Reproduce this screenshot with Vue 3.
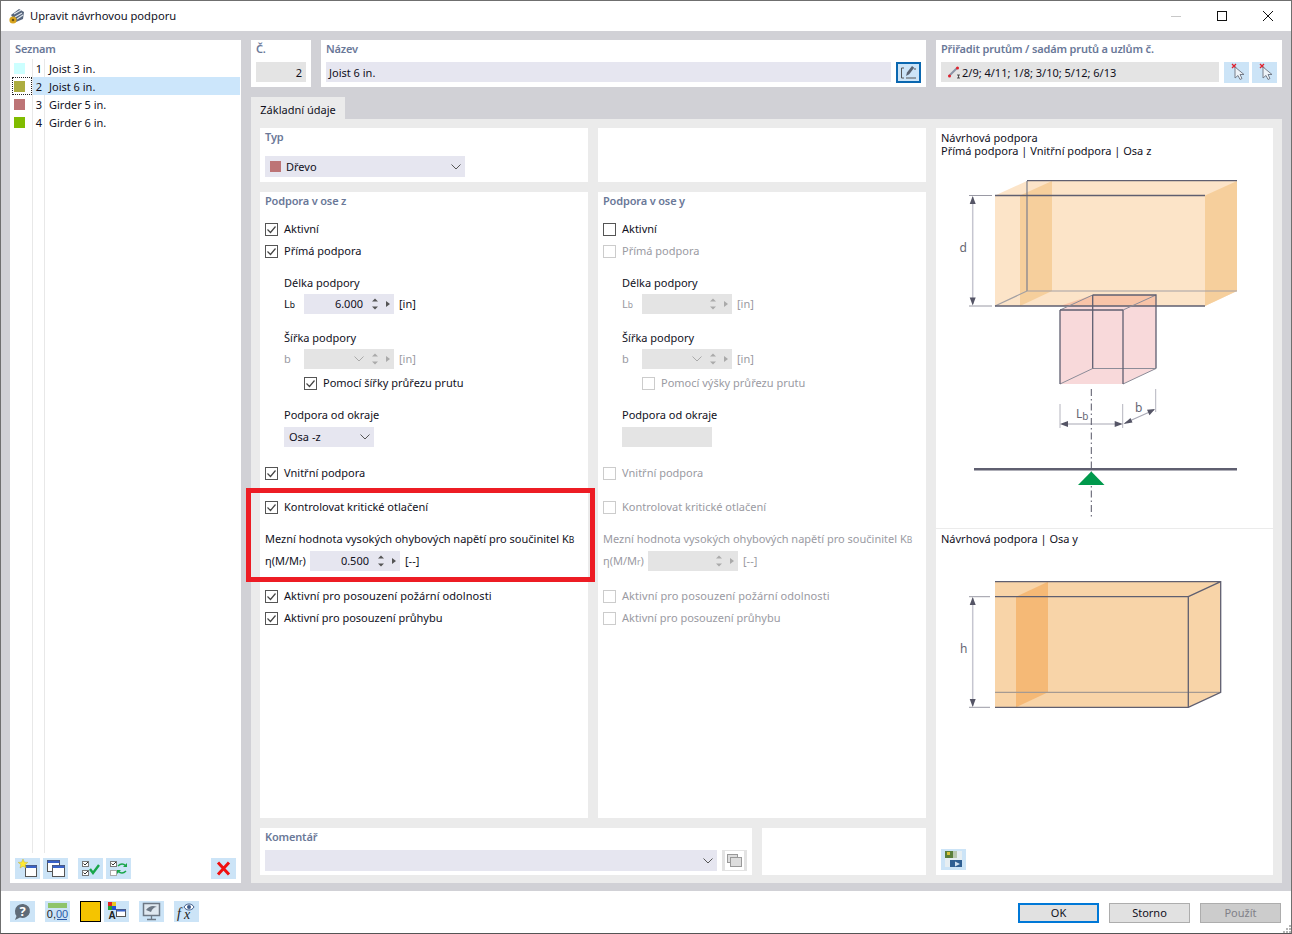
<script setup>
const items = [
  { n: 1, name: 'Joist 3 in.', color: '#ccffff' },
  { n: 2, name: 'Joist 6 in.', color: '#adad40', sel: true },
  { n: 3, name: 'Girder 5 in.', color: '#bd7476' },
  { n: 4, name: 'Girder 6 in.', color: '#80bc00' },
]
const cols = [
  { title: 'Podpora v ose z', off: false, active: true, direct: true, len: '6.000', useLabel: 'Pomocí šířky průřezu prutu', edge: 'Osa -z', lim: '0.500' },
  { title: 'Podpora v ose y', off: true, active: false, direct: false, len: '', useLabel: 'Pomocí výšky průřezu prutu', edge: '', lim: '' },
]
</script>

<template>
  <div class="win">
    <header class="titlebar">
      <svg class="appicon" viewBox="0 0 18 18">
        <path d="M3 8l8-6 5 3-1 7-7 3z" fill="#56657c" />
        <path d="M6 7l7-4M7 10l7-4M9 12l6-4" stroke="#dfe5ec" stroke-width="1.2" fill="none" />
        <circle cx="5" cy="13" r="3.6" fill="#d9a520" />
        <circle cx="5" cy="13" r="1.3" fill="#6b5310" />
      </svg>
      <span class="wintitle">Upravit návrhovou podporu</span>
      <div class="winbtns">
        <svg viewBox="0 0 46 30"><path d="M18 15.5h10" stroke="#c8c8c8" /></svg>
        <svg viewBox="0 0 46 30"><rect x="18.5" y="10.5" width="9" height="9" fill="none" stroke="#111" /></svg>
        <svg viewBox="0 0 46 30"><path d="M18 10l10 10M28 10l-10 10" stroke="#111" fill="none" /></svg>
      </div>
    </header>

    <main class="body">
      <aside class="listpanel">
        <div class="head listhead">Seznam</div>
        <div class="list">
          <div v-for="it in items" :key="it.n" class="lrow">
            <div class="swcell" :class="{ focus: it.sel }"><i class="sw" :style="{ background: it.color }"></i></div>
            <div class="lnum" :class="{ sel: it.sel }">{{ it.n }}</div>
            <div class="lname" :class="{ sel: it.sel }">{{ it.name }}</div>
          </div>
        </div>
        <div class="listbtns">
          <button class="ib">
            <svg viewBox="0 0 25 21"><rect x="10.5" y="7.5" width="11" height="11" fill="#fff" stroke="#555" /><rect x="10.5" y="7.5" width="11" height="2.5" fill="#3a63c8" /><path d="M8 1l1.4 3.2 3.4.2-2.6 2.2.9 3.4L8 8.2 5 10l.9-3.4L3.200 4.400l3.400-.2z" fill="#ffe933" stroke="#b9a520" stroke-width=".4" /></svg>
          </button>
          <button class="ib">
            <svg viewBox="0 0 25 21"><rect x="4.500" y="2.500" width="12" height="11" fill="#fff" stroke="#555" /><rect x="4.500" y="2.500" width="12" height="2.500" fill="#3a63c8" /><rect x="9.500" y="7.500" width="12" height="11" fill="#fff" stroke="#555" /><rect x="9.500" y="7.500" width="12" height="2.500" fill="#3a63c8" /></svg>
          </button>
          <button class="ib gap1">
            <svg viewBox="0 0 25 21"><rect x="4.500" y="3.500" width="6" height="5" fill="#fff" stroke="#777" /><rect x="4.500" y="12.500" width="6" height="5" fill="#fff" stroke="#777" /><path d="M5.500 5.500l1.500 1.500 3-3M5.500 14.500l1.500 1.500 3-3" stroke="#333" fill="none" /><path d="M12 11l3 4 6-8" stroke="#1aa64a" stroke-width="2.400" fill="none" /></svg>
          </button>
          <button class="ib">
            <svg viewBox="0 0 25 21"><rect x="4.500" y="3.500" width="6" height="5" fill="#fff" stroke="#777" /><rect x="4.500" y="12.500" width="6" height="5" fill="#fff" stroke="#aaa" /><path d="M5.500 5.500l1.500 1.500 3-3" stroke="#333" fill="none" /><path d="M12 8c3-3 6-2 8 0M20 13c-3 3-6 2-8 0" stroke="#1aa64a" stroke-width="1.500" fill="none" /><path d="M21 5v4h-4zM11 16v-4h4z" fill="#1aa64a" /></svg>
          </button>
          <button class="ib del">
            <svg viewBox="0 0 25 21"><path d="M7 4.500l11 12M18 4.500l-11 12" stroke="#f01010" stroke-width="3" fill="none" /></svg>
          </button>
        </div>
      </aside>

      <section class="right">
        <div class="toprow">
          <div class="tcard c-no">
            <div class="head">Č.</div>
            <div class="roinput numval">2</div>
          </div>
          <div class="tcard c-name">
            <div class="head">Název</div>
            <div class="nameline">
              <div class="input grow">Joist 6 in.</div>
              <button class="ib editbtn">
                <svg viewBox="0 0 25 21"><path d="M8 6H5.500v10H8M10 16h10M18 7h2" stroke="#555" fill="none" /><path d="M10 14l1-3.500 5-6.500 2.200 1.800-5 6.500z" fill="#5b6472" /></svg>
              </button>
            </div>
          </div>
          <div class="tcard c-assign">
            <div class="head">Přiřadit prutům / sadám prutů a uzlům č.</div>
            <div class="nameline">
              <div class="roinput grow assign">
                <svg class="memb" viewBox="0 0 14 14"><path d="M2 11l8-8" stroke="#8a93a5" stroke-width="2" /><circle cx="2.500" cy="11" r="1.500" fill="#e0202c" /><circle cx="10.500" cy="3" r="1.500" fill="#e0202c" /><path d="M10 10h3M11.500 10v3M10 13h3" stroke="#333" stroke-width=".8" /></svg>
                2/9; 4/11; 1/8; 3/10; 5/12; 6/13
              </div>
              <button class="ib pick">
                <svg viewBox="0 0 25 21"><path d="M8 2l4 4M12 2L8 6" stroke="#e0202c" stroke-width="1.300" /><path d="M11 5v11l3-2.500 2 4 2-1-2-4h4z" fill="#eef3f8" stroke="#6d7480" stroke-width=".9" /></svg>
              </button>
              <button class="ib pick2">
                <svg viewBox="0 0 25 21"><path d="M8 2l4 4M12 2L8 6" stroke="#e0202c" stroke-width="1.300" /><path d="M11 5v11l3-2.500 2 4 2-1-2-4h4z" fill="#eef3f8" stroke="#6d7480" stroke-width=".9" /></svg>
              </button>
            </div>
          </div>
        </div>

        <div class="tab">Základní údaje</div>

        <div class="tabpanel">
          <div class="card typ">
            <div class="head">Typ</div>
            <div class="select typsel">
              <i class="typsw"></i><span>Dřevo</span>
              <svg class="chev" viewBox="0 0 10 6"><path d="M.5.500l4.500 4.500 4.500-4.500" fill="none" stroke="#555" /></svg>
            </div>
          </div>
          <div class="card"></div>

          <div class="card pic">
            <div class="pictext">Návrhová podpora<br />Přímá podpora | Vnitřní podpora | Osa z</div>
            <svg class="dia1" viewBox="936 160 337 368" width="337" height="368">
              <path d="M995 195.500L1027 181H1237V291L1205 306H995Z" fill="#fce4c8" />
              <path d="M1205 195.500L1237 181V291L1205 306Z" fill="#f6cf9c" />
              <path d="M1020 195.500L1052 181V291L1020 306Z" fill="#f6cf9c" />
              <path d="M1060 384V310L1092.700 295H1156V368.500L1123 384Z" fill="#f8d9da" />
              <path d="M1060 306L1092.700 295H1156V306Z" fill="#f8c4a8" />
              <path d="M1027 181V291" stroke="#85858f" stroke-width="1.300" fill="none" />
              <path d="M1027 291H1237M995 306L1027 291" stroke="#a3a0a3" stroke-width="1.200" fill="none" />
              <path d="M1027 180.700H1237M995 195.500H1205M995 306H1205" stroke="#5f5f70" stroke-width="1.300" fill="none" />
              <path d="M1060 310L1092.700 295M1123 310L1156 295M1060 384L1092.700 368.500M1123 384L1156 368.500M1092.700 368.500H1156" stroke="#8c8c98" stroke-width="1" fill="none" />
              <path d="M1092.700 295V368.500M1092.700 295H1156V368.500M1060 310H1123M1060 310V384M1123 310V384" stroke="#5f5f70" stroke-width="1.300" fill="none" />
              <path d="M972.700 197V304" stroke="#c6c6d0" stroke-width="1.500" />
              <path d="M969 195.500H992M969 306H992" stroke="#9a9aa5" />
              <path d="M972.700 196l-3 8h6zM972.700 305.500l-3-8h6z" fill="#555566" />
              <text x="959.500" y="252" class="dim">d</text>
              <path d="M1060 404V428M1122.700 404V428M1155.700 389V412" stroke="#b4b4be" />
              <path d="M1062 424H1121M1125 423L1154 410" stroke="#a8a8b4" stroke-width="1.200" />
              <path d="M1060 424l8-3v6zM1122.700 424l-8-3v6zM1123.500 424l7-6 2 4.500zM1155 409l-8 .8 2.500 5.500z" fill="#555566" />
              <text x="1076" y="418" class="dim">L<tspan font-size="10" dy="2">b</tspan></text>
              <text x="1135" y="412" class="dim">b</text>
              <path d="M1091.300 389V518" stroke="#555566" stroke-dasharray="7 3 1.500 3" />
              <path d="M974 469.300H1237" stroke="#5f5f70" stroke-width="2.400" />
              <path d="M1091.300 471.500L1104.500 485H1078Z" fill="#00994c" />
            </svg>
            <div class="picdiv">Návrhová podpora | Osa y</div>
            <svg class="dia2" viewBox="936 560 337 160" width="337" height="160">
              <path d="M995 581.700H1220.700V692.300L1188.300 707.300H995Z" fill="#f8d4a8" />
              <path d="M1016 596.700L1048 581.700V692.300L1016 707.300Z" fill="#f5b976" />
              <path d="M995 692.300H1220.700" stroke="#a59a92" stroke-width="1.300" />
              <path d="M995 581.700H1220.700V692.300L1188.300 707.300H995M995 596.700H1188.300V707.300M1188.300 596.700L1220.700 581.700" stroke="#5f5f70" stroke-width="1.300" fill="none" />
              <path d="M972.700 598V706" stroke="#c6c6d0" stroke-width="1.500" />
              <path d="M969 596.700H990M969 707.300H990" stroke="#9a9aa5" />
              <path d="M972.700 597l-3 8h6zM972.700 707l-3-8h6z" fill="#555566" />
              <text x="960" y="653" class="dim">h</text>
            </svg>
            <button class="ib picbtn">
              <svg viewBox="0 0 25 21"><rect x="4" y="2" width="17" height="16" fill="#e6eef2" /><rect x="4" y="2" width="8" height="7" fill="#5b7f3a" /><rect x="6" y="3" width="3" height="3" fill="#d8c33a" /><rect x="12" y="2" width="4" height="7" fill="#b9c8b0" /><rect x="9" y="11" width="12" height="7" fill="#2f5f93" /><path d="M14 12.500l5 2.500-5 2.500z" fill="#cfe0f0" /></svg>
            </button>
          </div>

          <div v-for="c in cols" :key="c.title" class="card col" :class="{ off: c.off }">
            <div class="head">{{ c.title }}</div>

            <div class="chk first">
              <i class="box"><svg v-if="c.active" viewBox="0 0 13 13"><path d="M2.500 6.500l3 3 5-6" /></svg></i>
              <span class="on">Aktivní</span>
            </div>
            <div class="chk">
              <i class="box"><svg v-if="c.direct" viewBox="0 0 13 13"><path d="M2.500 6.500l3 3 5-6" /></svg></i>
              <span>Přímá podpora</span>
            </div>

            <div class="indent">
              <div class="lab lab1">Délka podpory</div>
              <div class="frow">
                <span class="sym">L<small>b</small></span>
                <div class="num" :class="{ nd: c.off }">
                  <span class="val">{{ c.len }}</span>
                  <svg class="spin" viewBox="0 0 30 20"><path d="M8 7.500l3-3 3 3zM8 12.500l3 3 3-3zM22 7v6l4-3z" /></svg>
                </div>
                <span class="unit">[in]</span>
              </div>

              <div class="lab lab2">Šířka podpory</div>
              <div class="frow always-off">
                <span class="sym">b</span>
                <div class="num nd">
                  <svg class="chev inner" viewBox="0 0 10 6"><path d="M.5.500l4.500 4.500 4.500-4.500" fill="none" stroke="#aaa" /></svg>
                  <svg class="spin" viewBox="0 0 30 20"><path d="M8 7.500l3-3 3 3zM8 12.500l3 3 3-3zM22 7v6l4-3z" /></svg>
                </div>
                <span class="unit">[in]</span>
              </div>
              <div class="chk sub">
                <i class="box"><svg v-if="!c.off" viewBox="0 0 13 13"><path d="M2.500 6.500l3 3 5-6" /></svg></i>
                <span>{{ c.useLabel }}</span>
              </div>

              <div class="lab lab3 on">Podpora od okraje</div>
              <div class="select edge" :class="{ nd: c.off }">
                <span>{{ c.edge }}</span>
                <svg v-if="!c.off" class="chev" viewBox="0 0 10 6"><path d="M.5.500l4.500 4.500 4.500-4.500" fill="none" stroke="#555" /></svg>
              </div>
            </div>

            <div class="chk gap15">
              <i class="box"><svg v-if="!c.off" viewBox="0 0 13 13"><path d="M2.500 6.500l3 3 5-6" /></svg></i>
              <span>Vnitřní podpora</span>
            </div>
            <div class="chk gap12">
              <i class="box"><svg v-if="!c.off" viewBox="0 0 13 13"><path d="M2.500 6.500l3 3 5-6" /></svg></i>
              <span>Kontrolovat kritické otlačení</span>
            </div>
            <div class="lab lab4">Mezní hodnota vysokých ohybových napětí pro součinitel K<small>B</small></div>
            <div class="frow">
              <span class="sym eta">η(M/M<small>r</small>)</span>
              <div class="num" :class="{ nd: c.off }">
                <span class="val">{{ c.lim }}</span>
                <svg class="spin" viewBox="0 0 30 20"><path d="M8 7.500l3-3 3 3zM8 12.500l3 3 3-3zM22 7v6l4-3z" /></svg>
              </div>
              <span class="unit">[--]</span>
            </div>
            <div class="chk gap14">
              <i class="box"><svg v-if="!c.off" viewBox="0 0 13 13"><path d="M2.500 6.500l3 3 5-6" /></svg></i>
              <span class="w2">Aktivní pro posouzení požární odolnosti</span>
            </div>
            <div class="chk">
              <i class="box"><svg v-if="!c.off" viewBox="0 0 13 13"><path d="M2.500 6.500l3 3 5-6" /></svg></i>
              <span>Aktivní pro posouzení průhybu</span>
            </div>
          </div>

          <div class="bottomcards">
            <div class="card comment">
              <div class="head">Komentář</div>
              <div class="nameline cmline">
                <div class="select grow">
                  <svg class="chev" viewBox="0 0 10 6"><path d="M.5.500l4.500 4.500 4.500-4.500" fill="none" stroke="#555" /></svg>
                </div>
                <button class="ib grayb">
                  <svg viewBox="0 0 25 21"><rect x="3" y="1" width="19" height="19" fill="#fff" /><rect x="5.500" y="4.500" width="10" height="8" fill="#ddd" stroke="#999" /><rect x="8.500" y="7.500" width="11" height="9" fill="#ddd" stroke="#999" /></svg>
                </button>
              </div>
            </div>
            <div class="card blank"></div>
          </div>
        </div>
      </section>
    </main>

    <footer class="foot">
      <div class="ftools">
        <button class="ib">
          <svg viewBox="0 0 25 21"><path d="M5 10a7.500 7 0 1 1 5 6.500L5 19l1.500-4A7 7 0 0 1 5 10z" fill="#5f6b78" /><text x="12.500" y="14.500" class="q">?</text></svg>
        </button>
        <button class="ib f2">
          <svg viewBox="0 0 25 21"><rect x="3" y="2" width="19" height="5" fill="#8ec46a" /><text x="12.500" y="17" class="zero">0,<tspan fill="#2a5aa8">00</tspan></text><path d="M12 18.500h10" stroke="#2a5aa8" /></svg>
        </button>
        <i class="yellow"></i>
        <button class="ib f4">
          <svg viewBox="0 0 25 21"><rect x="4" y="1" width="4" height="4" fill="#e02020" /><rect x="8" y="1" width="4" height="4" fill="#e8c820" /><rect x="4" y="5" width="4" height="4" fill="#20a030" /><rect x="8" y="5" width="4" height="4" fill="#2050d0" /><text x="8" y="18" class="aa">A</text><rect x="12.500" y="8.500" width="9" height="7" fill="#fff" stroke="#555" /><rect x="12.500" y="8.500" width="9" height="2" fill="#3a63c8" /></svg>
        </button>
        <button class="ib f5">
          <svg viewBox="0 0 25 21"><rect x="4.500" y="2.500" width="16" height="12" fill="#dfe8f0" stroke="#6d7885" stroke-width="1.500" /><path d="M7 9c3-4 7-5 11-3-3 0-5 2-6 5z" fill="#6d7885" /><path d="M12.500 15v3M8 18.500h9" stroke="#6d7885" stroke-width="1.300" /></svg>
        </button>
        <button class="ib f6">
          <svg viewBox="0 0 25 21"><text x="3" y="17" class="fx">f</text><text x="10" y="18" class="fx">x</text><path d="M10 6c2-4 8-4 10 0-2 4-8 4-10 0z" fill="#fff" stroke="#3c5a8a" /><circle cx="15" cy="6" r="2" fill="#3c5a8a" /></svg>
        </button>
      </div>
      <div class="fbtns">
        <button class="fb ok">OK</button>
        <button class="fb">Storno</button>
        <button class="fb ap">Použít</button>
      </div>
      <svg class="grip" viewBox="0 0 8 8"><path d="M6 0h2v2H6zM3 3h2v2H3zM6 3h2v2H6zM0 6h2v2H0zM3 6h2v2H3zM6 6h2v2H6z" fill="#b5b5b5" /></svg>
    </footer>

    <div class="redbox"></div>
  </div>
</template>

<style>
html, body { margin: 0; padding: 0; background: #fff; }
</style>

<style scoped>
* { box-sizing: border-box; }
.win {
  position: relative;
  width: 1292px;
  height: 934px;
  border: 1px solid #6f6f6f;
  border-bottom-color: #555;
  font: 11px/16px "Noto Sans", "Open Sans", sans-serif;
  color: #10101c;
  background: #fff;
  display: flex;
  flex-direction: column;
  overflow: hidden;
}
.titlebar { height: 30px; display: flex; align-items: center; padding-left: 7px; flex: none; }
.appicon { width: 18px; height: 18px; }
.wintitle { margin-left: 4px; font-size: 11.200px; }
.winbtns { margin-left: auto; display: flex; }
.winbtns svg { width: 46px; height: 30px; display: block; }

.body { height: 860px; flex: none; background: #d1d1d6; padding: 9px 9px 8px; display: flex; gap: 10px; }
.listpanel { width: 231px; background: #fff; display: flex; flex-direction: column; flex: none; }
.head { font-weight: 600; color: #6a7898; height: 18px; line-height: 18px; letter-spacing: -.16px; }
.listhead { padding-left: 5px; margin-bottom: 1px; }
.list {
  height: 794px;
  flex: none;
  background:
    linear-gradient(#e8e8e8, #e8e8e8) 22px 0 / 1px 100% no-repeat,
    linear-gradient(#e8e8e8, #e8e8e8) 34px 0 / 1px 100% no-repeat;
}
.lrow { height: 18px; display: flex; line-height: 19px; }
.swcell { width: 22px; flex: none; display: flex; align-items: center; padding-left: 4px; }
.sw { width: 11px; height: 11px; display: block; margin-top: 1px; }
.focus { outline: 1px dotted #222; outline-offset: -1px; margin-left: 2px; width: 20px; padding-left: 2px; }
.lnum { width: 12px; margin-left: 1px; text-align: right; padding-right: 3px; flex: none; }
.lname { flex: 1; margin-right: 1px; padding-left: 4px; }
.sel { background: #cce6fb; }
.listbtns { display: flex; padding: 5px 5px 0; }
.ib { width: 25px; height: 21px; padding: 0; border: 0; background: #cce4f7; display: block; flex: none; }
.ib svg { width: 25px; height: 21px; display: block; }
.listbtns .ib + .ib { margin-left: 3px; }
.listbtns .gap1.ib { margin-left: 10px; }
.listbtns .del.ib { margin-left: 80px; }

.right { flex: 1; min-width: 0; display: flex; flex-direction: column; }
.toprow { display: flex; gap: 10px; height: 47px; flex: none; }
.tcard { background: #fff; padding: 0 5px; }
.c-no { width: 60px; }
.c-name { width: 605px; }
.c-assign { width: 346px; }
.tcard .head { margin-bottom: 4px; }
.roinput { height: 20px; background: #e4e4e4; line-height: 21px; padding: 0 4px; }
.numval { text-align: right; }
.input { height: 20px; background: #e6e6f0; line-height: 21px; padding: 0 3px; }
.grow { flex: 1; min-width: 0; }
.nameline { display: flex; gap: 5px; }
.editbtn { outline: 2px solid #0a67b0; outline-offset: -2px; }
.assign { display: flex; align-items: center; padding-left: 6px; }
.memb { width: 14px; height: 14px; margin-right: 1px; }
.pick2 { margin-left: -2px; }

.tab { width: 94px; height: 22px; margin-top: 10px; background: #ebebeb; text-align: center; line-height: 25px; flex: none; }
.tabpanel {
  height: 764px;
  background: #ebebeb;
  padding: 9px 9px 8px;
  display: grid;
  grid-template-columns: 328px 328px 337px;
  grid-template-rows: 54px 626px 47px;
  gap: 10px;
}
.card { background: #fff; padding: 0 5px; }
.typsel { margin-top: 10px; width: 200px; }
.select { height: 21px; background: #e6e6f0; display: flex; align-items: center; padding: 0 4px; position: relative; }
.typsw { width: 11px; height: 11px; background: #bd7476; margin: 0 5px 0 1px; display: block; }
.chev { width: 10px; height: 6px; margin-left: auto; flex: none; }
.pic { grid-column: 3; grid-row: 1 / 4; padding: 0; display: flex; flex-direction: column; }
.pictext { height: 32px; padding: 3px 5px 0; line-height: 13px; }
.dia1, .dia2 { display: block; flex: none; }
.dim { font-size: 12px; fill: #666672; font-family: "Noto Sans", sans-serif; }
.picdiv { border-top: 1px solid #ebebeb; height: 32px; padding: 2px 5px 0; flex: none; }
.picbtn { margin: auto 0 5px 5px; }

.col { position: relative; }
.first { margin-top: 8px; }
.chk { height: 22px; display: flex; align-items: center; }
.box { width: 13px; height: 13px; border: 1px solid #555; display: block; margin-right: 6px; flex: none; background: #fff; }
.box svg { display: block; width: 13px; height: 13px; margin: -1px; fill: none; stroke: #444; stroke-width: 1.200; }
.indent { margin-left: 19px; }
.lab { height: 18px; line-height: 18px; white-space: nowrap; }
.lab1 { margin-top: 12px; }
.lab2 { margin-top: 15px; }
.lab3 { margin-top: 12px; }
.lab4 { margin-top: 12px; }
.frow { height: 20px; display: flex; align-items: center; margin-top: 2px; }
.lab4 + .frow { margin-top: 3px; }
.sym { width: 20px; flex: none; }
.eta { width: 45px; }
small { font-size: 8.500px; }
.num { width: 90px; height: 20px; background: #e6e6f0; display: flex; align-items: center; flex: none; }
.val { flex: 1; text-align: right; padding-right: 1px; }
.spin { width: 30px; height: 20px; flex: none; fill: #555; }
.nd { background: #e4e4e4; }
.nd .spin { fill: #aaa; }
.unit { margin-left: 5px; }
.sub { margin: 3px 0 0 20px; }
.edge { width: 90px; margin-top: 3px; height: 20px; padding-left: 5px; }
.gap15 { margin-top: 15px; }
.gap12 { margin-top: 12px; }
.gap14 { margin-top: 14px; }
.w2 { letter-spacing: .08px; }

.off { color: #9a9aa2; }
.off .head { color: #6a7898; }
.off .box { border-color: #ccc; }
.off .first .box { border-color: #555; }
.off .on, .off .lab1, .off .lab2, .off .lab3 { color: #10101c; }
.always-off { color: #9a9aa2; }

.bottomcards { grid-column: 1 / 3; display: flex; gap: 10px; }
.comment { width: 492px; }
.cmline { margin-top: 4px; }
.blank { flex: 1; }
.grayb { background: #e3e3e3; }

.foot { flex: 1; display: flex; align-items: flex-start; padding: 10px 10px 0 9px; position: relative; background: #fff; }
.ftools { display: flex; align-items: flex-start; }
.f2.ib { margin-left: 10px; }
.yellow { display: block; width: 21px; height: 21px; background: #f5c400; border: 1px solid #000; margin-left: 10px; }
.f4.ib { margin-left: 3px; }
.f5.ib, .f6.ib { margin-left: 10px; }
.q { font: 700 13px "Noto Sans", sans-serif; fill: #fff; text-anchor: middle; }
.zero { font: 400 11px "Liberation Sans", sans-serif; fill: #222; text-anchor: middle; }
.aa { font: 700 10px "Liberation Sans", sans-serif; fill: #222; text-anchor: middle; }
.fx { font: italic 14px "Liberation Serif", serif; fill: #222; }
.fbtns { margin-left: auto; display: flex; gap: 10px; margin-top: 2px; }
.fb { width: 81px; height: 20px; background: #e1e1e1; border: 1px solid #adadad; padding: 0; font: inherit; line-height: 18px; color: #10101c; }
.ok { border: 2px solid #0078d7; line-height: 16px; }
.ap { background: #cccccc; color: #808088; }
.grip { position: absolute; right: 0; bottom: 0; width: 8px; height: 8px; }
.redbox { position: absolute; left: 245px; top: 487px; width: 349px; height: 94px; border: 5px solid #ed1c24; pointer-events: none; }
</style>
